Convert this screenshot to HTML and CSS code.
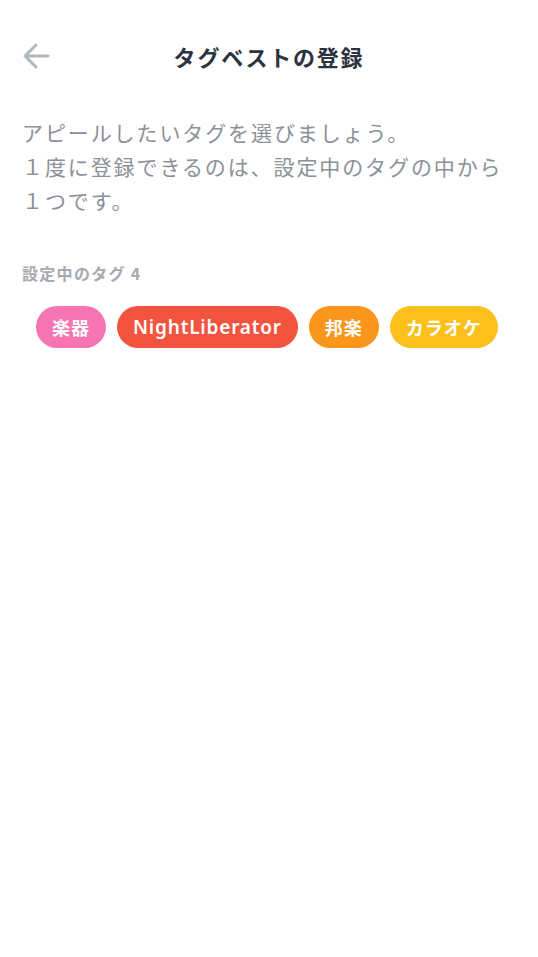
FILE: index.html
```html
<!DOCTYPE html>
<html lang="ja">
<head>
    <meta charset="UTF-8">
    <title>タグベストの登録</title>
    <link rel="stylesheet" href="styles.css">
</head>
<body>
<div class="header">
    <a class="back" href="#">
        <svg width="30" height="30" viewBox="0 0 30 30">
            <path d="M27 15 H4 M15 4 L4 15 L15 26" fill="none" stroke="#b3b6bc" stroke-width="3" stroke-linecap="round" stroke-linejoin="round"/>
        </svg>
    </a>
    <h1 class="title">タグベストの登録</h1>
</div>
<p class="intro">アピールしたいタグを選びましょう。<br>１度に登録できるのは、設定中のタグの中から<br>１つです。</p>
<h3 class="label">設定中のタグ 4</h3>
<ul class="tags">
    <li class="tag pink">楽器</li>
    <li class="tag red latin">NightLiberator</li>
    <li class="tag orange">邦楽</li>
    <li class="tag yellow">カラオケ</li>
</ul>
</body>
</html>
```

FILE: styles.css
```css
body {
    margin: 0;
    background: #fff;
    font-family: "Noto Sans CJK JP", "Noto Sans", sans-serif;
}
.header {
    position: relative;
    height: 90px;
    margin-top: 11px;
    display: flex;
    align-items: center;
    justify-content: center;
}
.back {
    position: absolute;
    left: 21px;
    top: 30px;
    display: block;
    width: 30px;
    height: 30px;
}
.back svg {
    display: block;
}
.title {
    margin: 0;
    font-size: 22px;
    font-weight: bold;
    letter-spacing: 1.8px;
    color: #2b3340;
    line-height: 30px;
}
.intro {
    margin: 14px 0 0;
    padding: 0 22px;
    font-size: 21px;
    letter-spacing: 1.9px;
    line-height: 34px;
    color: #8c9097;
}
.label {
    margin: 46px 0 0;
    padding: 0 22px;
    font-size: 16px;
    letter-spacing: 1.3px;
    line-height: 20px;
    font-weight: bold;
    color: #a6a9af;
}
.tags {
    list-style: none;
    margin: 23px 0 0;
    padding: 0 0 0 36px;
    display: flex;
    gap: 11px;
}
.tag {
    height: 42px;
    line-height: 42px;
    border-radius: 21px;
    padding: 0 16px;
    font-size: 18px;
    font-weight: bold;
    letter-spacing: 1px;
    color: #fff;
}
.latin {
    padding: 0 16px;
    font-family: "Noto Sans", sans-serif;
    font-size: 19px;
    font-weight: 600;
    letter-spacing: 0.8px;
}
.pink {
    background: #f674b2;
}
.red {
    background: #f2543f;
}
.orange {
    background: #f9961b;
}
.yellow {
    background: #fcc01c;
}
```
